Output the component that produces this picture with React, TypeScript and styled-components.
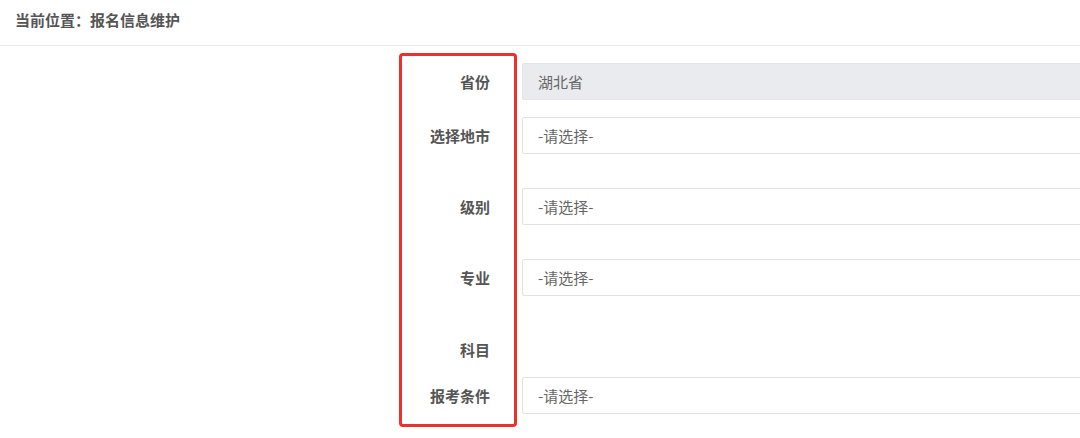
import React from 'react';
import styled, { createGlobalStyle } from 'styled-components';

const GlobalStyle = createGlobalStyle`
  html, body {
    margin: 0;
    padding: 0;
    background: #ffffff;
    overflow: hidden;
  }
  body {
    font-family: "Microsoft YaHei", "Noto Sans CJK SC", "Liberation Sans", sans-serif;
  }
`;

const Page = styled.div`
  width: 1080px;
  height: 438px;
  overflow: hidden;
  background: #fff;
`;

const Breadcrumb = styled.div`
  height: 46px;
  border-bottom: 1px solid #ebebeb;
  display: flex;
  align-items: center;
  padding: 0 0 6px 15px;
  box-sizing: border-box;
  font-size: 15px;
  font-weight: bold;
  color: #555;
`;

const Form = styled.div`
  position: relative;
  display: flex;
  flex-direction: column;
  padding: 17px 0 0 400px;
`;

const Row = styled.div<{ $space: number }>`
  display: flex;
  align-items: center;
  gap: 32px;
  height: 37px;
  margin-top: ${p => p.$space}px;
`;

const Label = styled.div`
  width: 90px;
  flex-shrink: 0;
  text-align: right;
  font-size: 15px;
  font-weight: bold;
  color: #555;
`;

const Field = styled.div<{ $readonly?: boolean }>`
  width: 620px;
  flex-shrink: 0;
  height: 37px;
  box-sizing: border-box;
  display: flex;
  align-items: center;
  padding-left: 15px;
  border: 1px solid ${p => (p.$readonly ? '#e3e5e8' : '#e2e2e2')};
  border-radius: 2px;
  background: ${p => (p.$readonly ? '#e9ebee' : '#fff')};
  font-size: 15px;
  color: #666;
`;

const Highlight = styled.div`
  position: absolute;
  left: 399px;
  top: 7px;
  width: 118px;
  height: 374px;
  box-sizing: border-box;
  border: 3px solid #e8322b;
  border-radius: 4px;
  pointer-events: none;
`;

const rows: { label: string; value?: string; readonly?: boolean; space: number }[] = [
  { label: '省份', value: '湖北省', readonly: true, space: 0 },
  { label: '选择地市', value: '-请选择-', space: 17 },
  { label: '级别', value: '-请选择-', space: 34 },
  { label: '专业', value: '-请选择-', space: 34 },
  { label: '科目', space: 35 },
  { label: '报考条件', value: '-请选择-', space: 9 },
];

export default function App() {
  return (
    <Page>
      <GlobalStyle />
      <Breadcrumb>当前位置：报名信息维护</Breadcrumb>
      <Form>
        {rows.map(r => (
          <Row key={r.label} $space={r.space}>
            <Label>{r.label}</Label>
            {r.value && <Field $readonly={r.readonly}>{r.value}</Field>}
          </Row>
        ))}
        <Highlight />
      </Form>
    </Page>
  );
}
